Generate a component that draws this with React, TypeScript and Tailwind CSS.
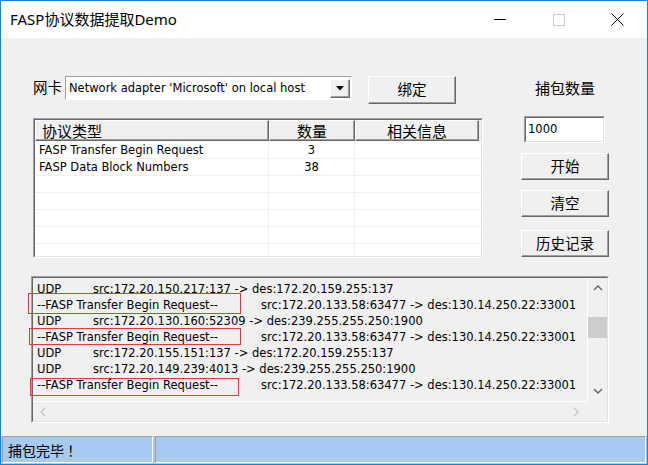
import React from "react";

const latin = "font-['DejaVu_Sans',sans-serif] text-[11.5px] text-black";
const cjk = "font-['Noto_Sans_CJK_SC',sans-serif] text-black";

const sunkenOuter = "border border-t-[#a0a0a0] border-l-[#a0a0a0] border-b-white border-r-white";
const sunkenInner = "border border-t-[#696969] border-l-[#696969] border-b-[#e3e3e3] border-r-[#e3e3e3]";
const raised =
  "border border-t-white border-l-white border-b-[#696969] border-r-[#696969] shadow-[inset_-1px_-1px_0_#a0a0a0] bg-[#f0f0f0]";

function Btn({ label, className = "" }: { label: string; className?: string }) {
  return (
    <div className={`flex items-center justify-center ${raised} text-[14.5px] leading-none ${cjk} ${className}`}>
      {label}
    </div>
  );
}

function Chevron({ dir, color }: { dir: "up" | "down" | "left" | "right"; color: string }) {
  const pts = {
    up: "1,6 5,2 9,6",
    down: "1,2 5,6 9,2",
    left: "6,1 2,5 6,9",
    right: "2,1 6,5 2,9",
  }[dir];
  const horiz = dir === "left" || dir === "right";
  return (
    <svg width={horiz ? 8 : 10} height={horiz ? 10 : 8} viewBox={horiz ? "0 0 8 10" : "0 0 10 8"}>
      <polyline points={pts} fill="none" stroke={color} strokeWidth="1.3" />
    </svg>
  );
}

const tableRows: [string, string, string][] = [
  ["FASP Transfer Begin Request", "3", ""],
  ["FASP Data Block Numbers", "38", ""],
  ["", "", ""],
  ["", "", ""],
  ["", "", ""],
  ["", "", ""],
  ["", "", ""],
];

const FASP = "--FASP Transfer Begin Request--";
const logs: { kind: string; text: string }[] = [
  { kind: "UDP", text: "src:172.20.150.217:137 -> des:172.20.159.255:137" },
  { kind: FASP, text: "src:172.20.133.58:63477 -> des:130.14.250.22:33001" },
  { kind: "UDP", text: "src:172.20.130.160:52309 -> des:239.255.255.250:1900" },
  { kind: FASP, text: "src:172.20.133.58:63477 -> des:130.14.250.22:33001" },
  { kind: "UDP", text: "src:172.20.155.151:137 -> des:172.20.159.255:137" },
  { kind: "UDP", text: "src:172.20.149.239:4013 -> des:239.255.255.250:1900" },
  { kind: FASP, text: "src:172.20.133.58:63477 -> des:130.14.250.22:33001" },
];

export default function App() {
  return (
    <div className="flex h-[465px] w-[648px] flex-col overflow-hidden border border-[#1883d7] bg-[#f0f0f0]">
      {/* title bar */}
      <div className="flex h-[37px] items-center bg-white">
        <span className="pl-[9px] font-['Noto_Sans','Noto_Sans_CJK_SC',sans-serif] text-[15px] text-black">
          FASP协议数据提取Demo
        </span>
        <div className="ml-auto flex h-full">
          <div className="flex w-[59px] items-center justify-center">
            <div className="h-px w-[12px] bg-black" />
          </div>
          <div className="flex w-[59px] items-center justify-center">
            <div className="h-[12px] w-[12px] border border-[#cccccc]" />
          </div>
          <div className="flex w-[59px] items-center justify-center">
            <svg width="13" height="13" viewBox="0 0 13 13">
              <path d="M0.5 0.5 L12.5 12.5 M12.5 0.5 L0.5 12.5" stroke="#000" strokeWidth="1" />
            </svg>
          </div>
        </div>
      </div>

      {/* client area */}
      <div className="flex flex-1 flex-col">
        <div className="flex pl-[32px]">
          {/* left column */}
          <div className="flex w-[450px] flex-col">
            <div className="mt-[38px] flex h-[28px] items-start">
              <span className={`text-[14.5px] leading-[22px] ${cjk}`}>网卡</span>
              <div className={`ml-[3px] h-[24px] w-[287px] ${sunkenOuter}`}>
                <div className="flex h-full items-center bg-white">
                  <span className={`mt-[2px] pl-[3px] leading-none ${latin}`}>Network adapter 'Microsoft' on local host</span>
                  <div className={`ml-auto mr-px flex h-[19px] w-[20px] items-center justify-center ${raised}`}>
                    <svg width="8" height="5" viewBox="0 0 8 5">
                      <polygon points="0,0 8,0 4,4.5" fill="#000" />
                    </svg>
                  </div>
                </div>
              </div>
              <Btn label="绑定" className="ml-[16px] h-[28px] w-[88px] pb-px" />
            </div>

            {/* list view */}
            <div className={`mt-[14px] h-[140px] w-[450px] ${sunkenOuter}`}>
              <div className={`h-full w-full overflow-hidden ${sunkenInner} bg-white`}>
                <div className={`flex h-[21px] bg-[#f0f0f0] text-[15px] leading-none ${cjk}`}>
                  <div className={`flex w-[234px] items-center pl-[6px] ${raised}`}>协议类型</div>
                  <div className={`flex w-[86px] items-center justify-center ${raised}`}>数量</div>
                  <div className={`flex w-[124px] items-center justify-center ${raised}`}>相关信息</div>
                </div>
                <div className="mt-px">
                  {tableRows.map((r, i) => (
                    <div key={i} className={`flex h-[17px] border-b border-[#f0f0f0] leading-[17px] ${latin}`}>
                      <div className="w-[234px] border-r border-[#f0f0f0] pl-[4px]">{r[0]}</div>
                      <div className="w-[86px] border-r border-[#f0f0f0] text-center">{r[1]}</div>
                      <div className="flex-1">{r[2]}</div>
                    </div>
                  ))}
                </div>
              </div>
            </div>
          </div>

          {/* right column */}
          <div className="ml-[38px] flex w-[88px] flex-col">
            <span className={`mt-[40px] text-center text-[15px] leading-[20px] ${cjk}`}>捕包数量</span>
            <div className={`ml-[3px] mt-[18px] h-[27px] w-[81px] ${sunkenOuter}`}>
              <div className={`flex h-full items-center bg-white ${sunkenInner}`}>
                <span className={`pl-[2px] leading-none ${latin}`}>1000</span>
              </div>
            </div>
            <Btn label="开始" className="mt-[10px] h-[27px] w-[88px] pb-px" />
            <Btn label="清空" className="mt-[10px] h-[27px] w-[88px] pb-px" />
            <Btn label="历史记录" className="mt-[13px] h-[27px] w-[88px] pb-px" />
          </div>
        </div>

        {/* log box */}
        <div className="relative ml-[30px] mt-[18px] h-[147px] w-[578px]">
          <div className={`h-full w-full ${sunkenOuter}`}>
            <div className={`flex h-full w-full flex-col ${sunkenInner}`}>
              <div className="flex h-[124px]">
                <div className="flex-1 overflow-hidden border-b border-r border-white pl-[4px] pt-[3px]">
                  {logs.map((l, i) => (
                    <div key={i} className={`flex whitespace-nowrap leading-[16px] ${latin}`}>
                      <span className={l.kind === "UDP" ? "w-[56px] shrink-0" : "w-[224px] shrink-0"}>{l.kind}</span>
                      <span>{l.text}</span>
                    </div>
                  ))}
                </div>
                <div className="flex w-[19px] flex-col">
                  <div className="flex h-[20px] items-center justify-center">
                    <Chevron dir="up" color="#606060" />
                  </div>
                  <div className="mt-[19px] h-[21px] bg-[#cdcdcd]" />
                  <div className="mt-auto flex h-[20px] items-center justify-center pb-[2px]">
                    <Chevron dir="down" color="#606060" />
                  </div>
                </div>
              </div>
              <div className="flex h-[19px]">
                <div className="flex flex-1 items-center justify-between pl-[6px] pr-[8px]">
                  <Chevron dir="left" color="#c4c4c4" />
                  <Chevron dir="right" color="#c4c4c4" />
                </div>
                <div className="w-[19px]" />
              </div>
            </div>
          </div>
          <div className="absolute left-[-3px] top-[17px] h-[21px] w-[213px] border border-[#e53935]" />
          <div className="absolute left-[-2px] top-[52px] h-[17px] w-[212px] border border-[#e53935]" />
          <div className="absolute left-[-1px] top-[102px] h-[18px] w-[209px] border border-[#e53935]" />
        </div>
      </div>

      {/* status bar */}
      <div className="flex h-[28px] bg-[#a6caf0] pl-px pr-px">
        <div className={`flex h-[27px] w-[151px] items-center pl-[5px] ${sunkenOuter}`}>
          <span className={`text-[14px] leading-none ${cjk}`}>捕包完毕 ！</span>
        </div>
        <div className={`ml-[2px] h-[27px] flex-1 ${sunkenOuter}`} />
      </div>
    </div>
  );
}
